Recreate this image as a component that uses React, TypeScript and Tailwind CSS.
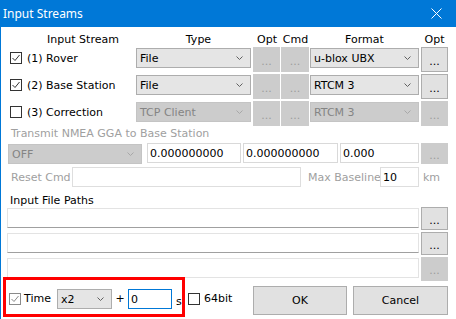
import React from "react";

function Chevron({ dim }: { dim?: boolean }) {
  return (
    <svg width="7" height="4" viewBox="0 0 7 4" className="shrink-0">
      <polyline points="0.5,0.5 3.5,3.5 6.5,0.5" fill="none" stroke={dim ? "#a8a8a8" : "#606060"} strokeWidth="1" />
    </svg>
  );
}

function Combo({ text, w, dim, className = "" }: { text: string; w: string; dim?: boolean; className?: string }) {
  return (
    <div
      className={`${w} h-[20px] shrink-0 flex items-center justify-between border pl-[3px] pr-[7px] ${
        dim ? "bg-[#cccccc] border-[#c4c4c4] text-[#848484]" : "bg-[#e5e5e5] border-[#adadad] text-black"
      } ${className}`}
    >
      <span className="whitespace-nowrap">{text}</span>
      <Chevron dim={dim} />
    </div>
  );
}

function Dots({ w, h, dim }: { w: string; h: string; dim?: boolean }) {
  return (
    <div
      className={`${w} ${h} shrink-0 flex items-center justify-center border ${
        dim ? "bg-[#cccccc] border-[#cccccc] text-[#9c9c9c]" : "bg-[#e1e1e1] border-[#adadad] text-black"
      }`}
    >
      <span className="pt-[3px]">...</span>
    </div>
  );
}

function Check({ on, gray }: { on?: boolean; gray?: boolean }) {
  const c = gray ? "#8a8a8a" : "#333333";
  return (
    <div
      className={`w-[12px] h-[12px] shrink-0 border bg-white flex items-center justify-center ${
        gray ? "border-[#8a8a8a]" : "border-[#333333]"
      }`}
    >
      {on && (
        <svg width="10" height="10" viewBox="0 0 10 10">
          <polyline points="1.5,5 4,7.5 8.5,2" fill="none" stroke={c} strokeWidth="1" />
        </svg>
      )}
    </div>
  );
}

function Field({ w, text = "", className = "" }: { w: string; text?: string; className?: string }) {
  return (
    <div className={`${w} h-[20px] shrink-0 flex items-center bg-white border pl-[2px] ${className}`}>
      <span className="whitespace-nowrap">{text}</span>
    </div>
  );
}

const streams = [
  { label: "(1) Rover", on: true, type: "File", format: "u-blox UBX", dim: false },
  { label: "(2) Base Station", on: true, type: "File", format: "RTCM 3", dim: false },
  { label: "(3) Correction", on: false, type: "TCP Client", format: "RTCM 3", dim: true },
];

export default function App() {
  return (
    <div className="w-[456px] h-[319px] relative overflow-hidden bg-white font-['DejaVu_Sans',sans-serif] text-[11px] leading-[13px] text-black">
      {/* title bar */}
      <div className="h-[27px] bg-[#0078d7] flex items-center justify-between pl-[3px] pr-[14px] text-white">
        <span className="font-['Noto_Sans',sans-serif] text-[12px] pb-[1px]">Input Streams</span>
        <svg width="11" height="11" viewBox="0 0 11 11">
          <path d="M0.5 0.5 L10.5 10.5 M10.5 0.5 L0.5 10.5" stroke="#ffffff" strokeWidth="1" />
        </svg>
      </div>

      <div className="h-[292px] border-l border-[#0078d7] flex flex-col">
        {/* header */}
        <div className="h-[20px] flex items-end pb-[1px] ml-[-1px]">
          <div className="w-[136px] pl-[30px] text-center">Input Stream</div>
          <div className="w-[115px] pl-[10px] text-center">Type</div>
          <div className="w-[30px] pl-[2px] text-center">Opt</div>
          <div className="w-[29px] text-center">Cmd</div>
          <div className="w-[109px] text-center">Format</div>
          <div className="w-[29px] pl-[2px] text-center">Opt</div>
        </div>

        {streams.map((s) => (
          <div key={s.label} className="h-[27px] flex items-start ml-[-1px]">
            <div className="w-[136px] h-[22px] pl-[10px] flex items-center gap-[5px]">
              <Check on={s.on} />
              <span className="whitespace-nowrap">{s.label}</span>
            </div>
            <Combo text={s.type} w="w-[115px]" dim={s.dim} className="mt-[1px]" />
            <div className="w-[2px]" />
            <Dots w="w-[27px]" h="h-[25px]" dim />
            <div className="w-[1px]" />
            <Dots w="w-[28px]" h="h-[25px]" dim />
            <div className="w-[1px]" />
            <Combo text={s.format} w="w-[109px]" dim={s.dim} className="mt-[1px]" />
            <div className="w-[2px]" />
            <Dots w="w-[27px]" h="h-[25px]" dim={s.dim} />
          </div>
        ))}

        <div className="h-[14px] pl-[10px] text-[#a0a0a0] leading-[14px] mt-[-1px] whitespace-nowrap">
          Transmit NMEA GGA to Base Station
        </div>

        <div className="h-[21px] mt-[2px] flex items-start pl-[7px]">
          <Combo text="OFF" w="w-[134px]" dim className="mt-[1px]" />
          <div className="w-[5px]" />
          <Field w="w-[94px]" text="0.000000000" className="border-[#d9d9d9]" />
          <div className="w-[2px]" />
          <Field w="w-[95px]" text="0.000000000" className="border-[#d9d9d9]" />
          <div className="w-[2px]" />
          <Field w="w-[79px]" text="0.000" className="border-[#d9d9d9]" />
          <div className="w-[2px]" />
          <Dots w="w-[27px]" h="h-[21px]" dim />
        </div>

        <div className="h-[20px] mt-[3px] flex items-center text-[#a0a0a0]">
          <div className="w-[71px] pl-[10px] whitespace-nowrap">Reset Cmd</div>
          <Field w="w-[229px]" className="border-[#dedede]" />
          <div className="w-[79px] pl-[7px] whitespace-nowrap">Max Baseline</div>
          <Field w="w-[39px]" text="10" className="border-[#dedede] text-black" />
          <div className="pl-[4px]">km</div>
        </div>

        <div className="h-[12px] leading-[12px] mt-[8px] pl-[9px] whitespace-nowrap">Input File Paths</div>

        <div className="flex flex-col pl-[6px]">
          {[0, 1, 2].map((i) => (
            <div key={i} className="h-[25px] flex items-start">
              <Field
                w="w-[412px]"
                className={`mt-[1px] ${i < 2 ? "border-[#e3e3e3] border-b-[#a0a0a0]" : "border-[#e3e3e3]"}`}
              />
              <div className="w-[2px]" />
              <Dots w="w-[27px]" h={i < 2 ? "h-[23px]" : "h-[24px]"} dim={i === 2} />
            </div>
          ))}
        </div>

        {/* bottom row */}
        <div className="h-[30px] mt-[4px] flex items-start ml-[-1px]">
          <div className="w-[57px] pl-[9px] mt-[6px] flex items-center gap-[3px]">
            <Check on gray />
            <span>Time</span>
          </div>
          <Combo text="x2" w="w-[55px]" className="mt-[3px]" />
          <div className="w-[16px] text-center mt-[6px]">+</div>
          <Field w="w-[44px]" text="0" className="mt-[3px] border-[#0078d7]" />
          <div className="w-[16px] pl-[4px] mt-[9px]">s</div>
          <div className="w-[65px] flex items-center gap-[4px] mt-[6px]">
            <Check />
            <span>64bit</span>
          </div>
          <div className="w-[94px] h-[29px] border border-[#adadad] bg-[#e1e1e1] flex items-center justify-center">OK</div>
          <div className="w-[6px]" />
          <div className="w-[95px] h-[29px] border border-[#adadad] bg-[#e1e1e1] flex items-center justify-center">Cancel</div>
        </div>
      </div>

      {/* highlight annotation */}
      <div className="absolute left-[3px] top-[277px] w-[182px] h-[40px] border-[3px] border-[#ff0000]" />
    </div>
  );
}
